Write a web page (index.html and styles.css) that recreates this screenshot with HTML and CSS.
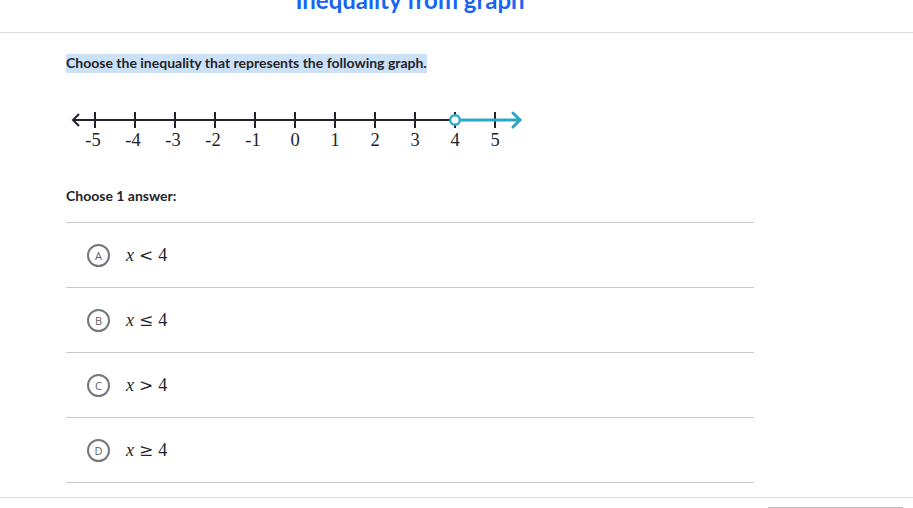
FILE: index.html
```html
<!DOCTYPE html>
<html>
<head>
<meta charset="utf-8">
<link rel="stylesheet" href="styles.css">
</head>
<body>
<header class="top">
  <h1 class="title">Inequality from graph</h1>
</header>
<main class="content">
  <p class="prompt"><span class="hl">Choose the inequality that represents the following graph.</span></p>
  <svg class="numline" width="470" height="55" viewBox="0 0 470 55">
    <g stroke="#21242c" stroke-width="2" fill="none">
      <line x1="7" y1="20" x2="384" y2="20"/>
      <polyline points="13,14 7,20 13,26"/>
      <line x1="29" y1="12" x2="29" y2="28"/>
      <line x1="69" y1="12" x2="69" y2="28"/>
      <line x1="109" y1="12" x2="109" y2="28"/>
      <line x1="149" y1="12" x2="149" y2="28"/>
      <line x1="189" y1="12" x2="189" y2="28"/>
      <line x1="229" y1="12" x2="229" y2="28"/>
      <line x1="269" y1="12" x2="269" y2="28"/>
      <line x1="309" y1="12" x2="309" y2="28"/>
      <line x1="349" y1="12" x2="349" y2="28"/>
      <line x1="389" y1="12" x2="389" y2="28"/>
      <line x1="429" y1="12" x2="429" y2="28"/>
    </g>
    <g stroke="#2ba7c6" stroke-width="3" fill="none" stroke-linecap="round" stroke-linejoin="round">
      <line x1="394" y1="20" x2="454" y2="20"/>
      <polyline points="447,13 454,20 447,27"/>
    </g>
    <circle cx="389" cy="20" r="4.8" fill="#fff" stroke="#2ba7c6" stroke-width="2.4"/>
    <g class="lbl" text-anchor="middle">
      <text x="27" y="46">-5</text>
      <text x="67" y="46">-4</text>
      <text x="107" y="46">-3</text>
      <text x="147" y="46">-2</text>
      <text x="187" y="46">-1</text>
      <text x="229" y="46">0</text>
      <text x="269" y="46">1</text>
      <text x="309" y="46">2</text>
      <text x="349" y="46">3</text>
      <text x="389" y="46">4</text>
      <text x="429" y="46">5</text>
    </g>
  </svg>
  <p class="choose">Choose 1 answer:</p>
  <ul class="choices">
    <li class="choice"><span class="letter">A</span><span class="math"><i>x</i><span class="rel">&lt;</span>4</span></li>
    <li class="choice"><span class="letter">B</span><span class="math"><i>x</i><span class="rel">≤</span>4</span></li>
    <li class="choice"><span class="letter">C</span><span class="math"><i>x</i><span class="rel">&gt;</span>4</span></li>
    <li class="choice"><span class="letter">D</span><span class="math"><i>x</i><span class="rel">≥</span>4</span></li>
  </ul>
</main>
<footer class="bottom">
  <div class="btn"></div>
</footer>
</body>
</html>
```
FILE: styles.css
```css
html, body {
  margin: 0;
  padding: 0;
  background: #fff;
}
body {
  font-family: Lato, "Open Sans", sans-serif;
  color: #21242c;
  width: 913px;
  height: 508px;
  overflow: hidden;
}
.top {
  height: 32px;
  border-bottom: 1px solid #dcdcdc;
  overflow: hidden;
  display: flex;
  justify-content: center;
  padding-right: 93px;
}
.title {
  margin: -12px 0 0 0;
  font-size: 24px;
  line-height: 24px;
  font-weight: 700;
  color: #1865f2;
  white-space: nowrap;
}
.content {
  padding: 0 0 0 66px;
}
.prompt {
  margin: 21px 0 0 0;
  font-size: 14px;
  font-weight: 700;
  line-height: 17px;
  height: 19px;
}
.hl {
  display: inline-block;
  background: #cde1f6;
  line-height: 17px;
  padding-bottom: 2px;
}
.numline {
  display: block;
  margin-top: 27px;
}
.lbl {
  font-family: "Liberation Serif", "Times New Roman", serif;
  font-size: 18.5px;
  fill: #21242c;
}
.choose {
  margin: 31px 0 0 0;
  font-size: 14px;
  font-weight: 700;
  line-height: 20px;
}
.choices {
  list-style: none;
  margin: 16px 0 0 0;
  padding: 0;
  width: 688px;
}
.choice {
  height: 64px;
  border-top: 1px solid #c9cacc;
  display: flex;
  align-items: center;
  padding-left: 21px;
}
.choice:last-child {
  border-bottom: 1px solid #c9cacc;
}
.letter {
  width: 19px;
  height: 19px;
  border: 2px solid #75777c;
  border-radius: 50%;
  display: flex;
  align-items: center;
  justify-content: center;
  font-family: "Open Sans", sans-serif;
  font-size: 11px;
  font-weight: 400;
  color: #5f6166;
  margin-right: 16px;
}
.math {
  font-family: "Liberation Serif", "Times New Roman", serif;
  font-size: 18px;
  color: #21242c;
  display: flex;
  align-items: baseline;
}
.math i {
  font-style: italic;
}
.rel {
  font-family: "DejaVu Serif", serif;
  font-size: 17px;
  margin: 0 5px;
}
.bottom {
  margin-top: 14px;
  border-top: 1px solid #dcdcdc;
  padding-top: 9px;
}
.btn {
  margin-left: 768px;
  width: 135px;
  height: 0;
  border-top: 1px solid #bdbdbd;
}
```
